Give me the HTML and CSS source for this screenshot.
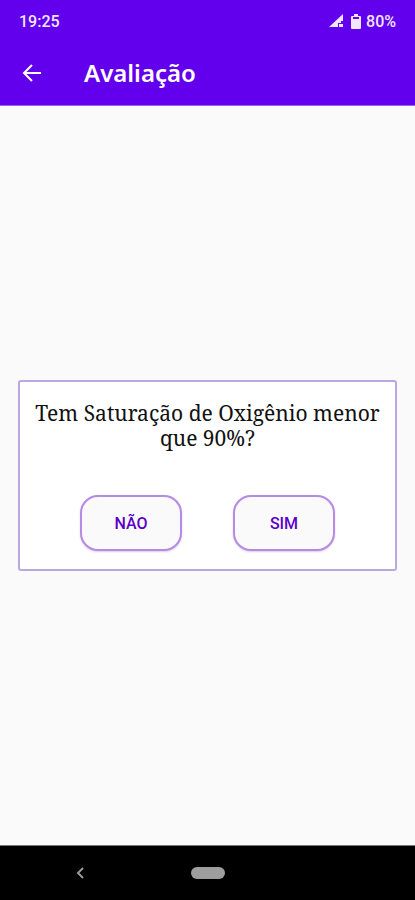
FILE: index.html
```html
<!DOCTYPE html>
<html lang="pt-BR">
<head>
<meta charset="utf-8">
<meta name="viewport" content="width=device-width, initial-scale=1">
<title>Avaliação</title>
<link rel="stylesheet" href="styles.css">
</head>
<body>
<header class="top">
  <div class="status">
    <span class="clock">19:25</span>
    <div class="indicators">
      <svg class="signal" viewBox="0 0 15 14" aria-hidden="true"><path fill="currentColor" d="M14 0v7h-2v2H9v4H0z"/><path fill="currentColor" d="M10 10h4v3h-4z"/></svg>
      <svg class="battery" viewBox="0 0 10 15" aria-hidden="true"><path fill="currentColor" d="M3 0h4v2h2q1 0 1 1v11q0 1-1 1H1q-1 0-1-1V3q0-1 1-1h2z"/><path fill="#6200ee" d="M2 3h6v2H2z"/></svg>
      <span>80%</span>
    </div>
  </div>
  <div class="appbar">
    <button class="back" type="button" aria-label="Voltar">
      <svg viewBox="0 0 20 18" aria-hidden="true"><path d="M19 9H2M10 1L2 9l8 8" fill="none" stroke="currentColor" stroke-width="2"/></svg>
    </button>
    <h1>Avaliação</h1>
  </div>
</header>
<main>
  <section class="card">
    <p>Tem Saturação de Oxigênio menor que 90%?</p>
    <div class="answers">
      <button class="answer" type="button">NÃO</button>
      <button class="answer" type="button">SIM</button>
    </div>
  </section>
</main>
<nav class="system">
  <button class="sys-back" type="button" aria-label="Voltar do sistema">
    <svg viewBox="0 0 8 12" aria-hidden="true"><path d="M7 1L2 6l5 5" fill="none" stroke="currentColor" stroke-width="2"/></svg>
  </button>
  <button class="home" type="button" aria-label="Início"></button>
</nav>
</body>
</html>
```
FILE: styles.css
```css
* { box-sizing: border-box; }
body {
  margin: 0;
  min-height: 100vh;
  display: flex;
  flex-direction: column;
  background: #fafafa;
  font-family: Roboto, sans-serif;
}
button {
  font: inherit;
  padding: 0;
  border: 0;
  background: none;
}
svg { display: block; }
.top {
  background: #6200ee;
  color: #fff;
  border-bottom: 1px solid #9a62ee;
}
.status {
  height: 42px;
  padding: 0 19px;
  display: flex;
  align-items: center;
  justify-content: space-between;
  font-size: 16px;
  font-weight: 500;
  color: #f1e6ff;
}
.indicators {
  display: flex;
  align-items: center;
  gap: 5px;
}
.battery { margin-left: 2px; }
.signal { width: 15px; height: 14px; }
.battery { width: 10px; height: 15px; }
.appbar {
  height: 63px;
  padding: 0 22px 2px;
  display: flex;
  align-items: center;
  gap: 42px;
}
.back {
  width: 20px;
  height: 18px;
  color: inherit;
}
.back svg { width: 20px; height: 18px; }
h1 {
  margin: 0;
  font-family: "Noto Sans", sans-serif;
  font-size: 24px;
  line-height: 30px;
  font-weight: 600;
}
main {
  flex: 1;
  display: flex;
  align-items: center;
  padding: 18px;
}
.card {
  flex: 1;
  padding: 19px 8px 18px;
  background: #fff;
  border: 2px solid #b9a9e0;
  border-radius: 3px;
}
.card p {
  margin: 0;
  text-align: center;
  font-family: "Noto Serif", "DejaVu Serif Condensed", "DejaVu Serif", serif;
  font-size: 21px;
  line-height: 25px;
  color: #111;
}
.answers {
  margin-top: 44px;
  display: flex;
  justify-content: center;
  gap: 51px;
}
.answer {
  width: 102px;
  height: 56px;
  border: 2px solid #b78ae6;
  border-radius: 18px;
  background: #fafafa;
  box-shadow: 0 1px 2px #d8d0e0;
  color: #5a00c8;
  font-size: 16px;
  font-weight: 500;
}
.system {
  height: 55px;
  background: #000;
  border-top: 1px solid #777;
  display: grid;
  grid-template-columns: 1fr 34px 1fr;
  align-items: center;
  color: #999;
}
.sys-back {
  justify-self: end;
  width: 8px;
  height: 12px;
  margin-right: 107px;
  color: inherit;
}
.sys-back svg { width: 8px; height: 12px; }
.home {
  height: 12px;
  border-radius: 6px;
  background: #9e9e9e;
}
```
